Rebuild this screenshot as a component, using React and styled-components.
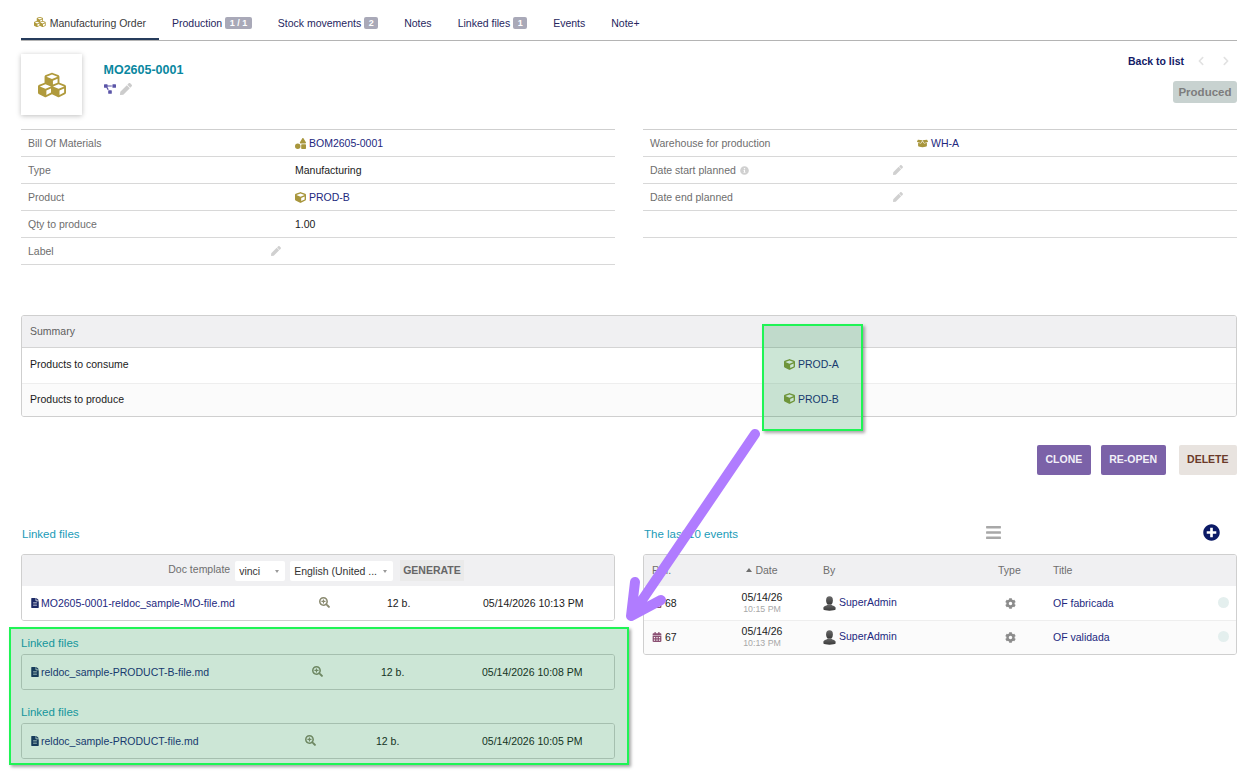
import styled, { createGlobalStyle } from "styled-components";
import {
  FaBars,
  FaBoxOpen,
  FaCalendarAlt,
  FaChevronLeft,
  FaChevronRight,
  FaCog,
  FaCube,
  FaCubes,
  FaFileAlt,
  FaInfoCircle,
  FaPen,
  FaPlusCircle,
  FaProjectDiagram,
  FaSearchPlus,
  FaShapes,
} from "react-icons/fa";

const tabs = [
  { label: "Production", badge: "1 / 1" },
  { label: "Stock movements", badge: "2" },
  { label: "Notes" },
  { label: "Linked files", badge: "1" },
  { label: "Events" },
  { label: "Note+" },
];

const events = [
  { ref: "68", time: "10:15 PM", title: "OF fabricada" },
  { ref: "67", time: "10:13 PM", title: "OF validada" },
];

// generic user picture, a dark bust fading to the bottom
function UserPicture({ id }) {
  return (
    <svg width="13" height="15" viewBox="0 0 13 15">
      <defs>
        <linearGradient id={id} x1="0" y1="0" x2="0" y2="1">
          <stop offset="0" stopColor="#6a6a6a" />
          <stop offset="1" stopColor="#3a3a3a" />
        </linearGradient>
      </defs>
      <ellipse cx="6.5" cy="4.4" rx="3.4" ry="4.2" fill={`url(#${id})`} />
      <path
        d="M4.8 8.2 C4.6 9.6 1 9.6 0.4 11.6 L0.4 13.6 C1.6 15 11.4 15 12.6 13.6 L12.6 11.6 C12 9.6 8.4 9.6 8.2 8.2 Z"
        fill={`url(#${id})`}
      />
    </svg>
  );
}

export default function App() {
  return (
    <Page>
      <GlobalStyle />
      <Tabs>
        <ActiveTab>
          <FaCubes size={12} color="#b09a3c" />
          Manufacturing Order
        </ActiveTab>
        {tabs.map((tab) => (
          <Tab key={tab.label}>
            {tab.label}
            {tab.badge && <Badge>{tab.badge}</Badge>}
          </Tab>
        ))}
      </Tabs>

      <Header>
        <Avatar>
          <FaCubes size={28} color="#b09a3c" />
        </Avatar>
        <HeaderInfo>
          <Ref>MO2605-0001</Ref>
          <RefIcons>
            <FaProjectDiagram size={12} color="#5b55a8" />
            <FaPen size={12} color="#cccccc" />
          </RefIcons>
        </HeaderInfo>
        <HeaderRight>
          <BackRow>
            <BackLink>Back to list</BackLink>
            <FaChevronLeft size={10} color="#e2e2e2" />
            <FaChevronRight size={10} color="#e2e2e2" />
          </BackRow>
          <Status>Produced</Status>
        </HeaderRight>
      </Header>

      <Columns>
        <FieldTable>
          <FieldRow>
            <FieldLabel>Bill Of Materials</FieldLabel>
            <FieldLink>
              <FaShapes size={11} color="#a8963c" />
              BOM2605-0001
            </FieldLink>
          </FieldRow>
          <FieldRow>
            <FieldLabel>Type</FieldLabel>
            <FieldValue>Manufacturing</FieldValue>
          </FieldRow>
          <FieldRow>
            <FieldLabel>Product</FieldLabel>
            <FieldLink>
              <FaCube size={11} color="#a8963c" />
              PROD-B
            </FieldLink>
          </FieldRow>
          <FieldRow>
            <FieldLabel>Qty to produce</FieldLabel>
            <FieldValue>1.00</FieldValue>
          </FieldRow>
          <FieldRow>
            <FieldLabel>
              Label
              <FaPen size={10} color="#d0d0d0" />
            </FieldLabel>
            <FieldValue />
          </FieldRow>
        </FieldTable>
        <FieldTable>
          <FieldRow>
            <FieldLabel>Warehouse for production</FieldLabel>
            <FieldLink>
              <FaBoxOpen size={11} color="#a8963c" />
              WH-A
            </FieldLink>
          </FieldRow>
          <FieldRow>
            <FieldLabel>
              <LabelWithHint>
                Date start planned
                <FaInfoCircle size={9} color="#d0d0d0" />
              </LabelWithHint>
              <FaPen size={10} color="#d0d0d0" />
            </FieldLabel>
            <FieldValue />
          </FieldRow>
          <FieldRow>
            <FieldLabel>
              Date end planned
              <FaPen size={10} color="#d0d0d0" />
            </FieldLabel>
            <FieldValue />
          </FieldRow>
          <FieldRow />
        </FieldTable>
      </Columns>

      <Summary>
        <SummaryHead>Summary</SummaryHead>
        <SummaryRow>
          <span>Products to consume</span>
          <SummaryLink>
            <FaCube size={11} color="#8a9a3c" />
            PROD-A
          </SummaryLink>
        </SummaryRow>
        <SummaryRow $striped>
          <span>Products to produce</span>
          <SummaryLink>
            <FaCube size={11} color="#8a9a3c" />
            PROD-B
          </SummaryLink>
        </SummaryRow>
      </Summary>

      <Actions>
        <ActionButton>CLONE</ActionButton>
        <ActionButton>RE-OPEN</ActionButton>
        <DeleteButton>DELETE</DeleteButton>
      </Actions>

      <Columns>
        <div>
          <SectionTitle>Linked files</SectionTitle>
          <ListBox>
            <Toolbar>
              <ToolbarLabel>Doc template</ToolbarLabel>
              <Select $width={50}>vinci</Select>
              <Select $width={103}>English (United ...</Select>
              <Generate>GENERATE</Generate>
            </Toolbar>
            <FileRow $cols="289px 68px 96px 1fr">
              <FileName>
                <FaFileAlt size={10} color="#1c2a66" />
                MO2605-0001-reldoc_sample-MO-file.md
              </FileName>
              <PreviewIcon size={11} color="#8a8a70" />
              <span>12 b.</span>
              <span>05/14/2026 10:13 PM</span>
            </FileRow>
          </ListBox>
          <SubTitle>Linked files</SubTitle>
          <ListBox>
            <FileRow $cols="282px 69px 101px 1fr">
              <FileName>
                <FaFileAlt size={10} color="#1c2a66" />
                reldoc_sample-PRODUCT-B-file.md
              </FileName>
              <PreviewIcon size={11} color="#8a8a70" />
              <span>12 b.</span>
              <span>05/14/2026 10:08 PM</span>
            </FileRow>
          </ListBox>
          <SubTitle>Linked files</SubTitle>
          <ListBox>
            <FileRow $cols="275px 71px 106px 1fr">
              <FileName>
                <FaFileAlt size={10} color="#1c2a66" />
                reldoc_sample-PRODUCT-file.md
              </FileName>
              <PreviewIcon size={11} color="#8a8a70" />
              <span>12 b.</span>
              <span>05/14/2026 10:05 PM</span>
            </FileRow>
          </ListBox>
        </div>
        <div>
          <EventsTitle>
            <span>The last 10 events</span>
            <TitleIcon>
              <FaBars size={17} color="#a8a8a8" />
            </TitleIcon>
            <TitleIcon>
              <FaPlusCircle size={17} color="#0b1a66" />
            </TitleIcon>
          </EventsTitle>
          <ListBox>
            <EventHead>
              <span>Ref.</span>
              <DateHead>
                <Caret />
                Date
              </DateHead>
              <ByCell>By</ByCell>
              <span>Type</span>
              <span>Title</span>
            </EventHead>
            {events.map((event, index) => (
              <EventRow key={event.ref} $striped={index === 1}>
                <EventRef>
                  <FaCalendarAlt size={10} color="#8a4f72" />
                  {event.ref}
                </EventRef>
                <DateCell>
                  05/14/26
                  <small>{event.time}</small>
                </DateCell>
                <ByCell>
                  <UserLink>
                    <UserPicture id={`user-${event.ref}`} />
                    <UserName>SuperAdmin</UserName>
                  </UserLink>
                </ByCell>
                <TypeCell>
                  <FaCog size={11} color="#8c8c8c" />
                </TypeCell>
                <EventTitle>{event.title}</EventTitle>
                <Dot />
              </EventRow>
            ))}
          </ListBox>
        </div>
      </Columns>

      <TopHighlight />
      <BottomHighlight />
      <Arrow viewBox="0 0 1256 773">
        <path
          d="M755 434 L634 612 M635 582 L631 616 L661 600"
          fill="none"
          stroke="#b07cff"
          strokeWidth="10"
          strokeLinecap="round"
          strokeLinejoin="round"
        />
      </Arrow>
    </Page>
  );
}

const GlobalStyle = createGlobalStyle`
  html, body {
    margin: 0;
    padding: 0;
    background: #ffffff;
  }
  body {
    font-family: "Liberation Sans", Arial, sans-serif;
    font-size: 10.5px;
    color: #1a1a1a;
  }
`;

const Page = styled.div`
  position: relative;
  width: 1256px;
  height: 773px;
  padding: 0 19px 0 21px;
  box-sizing: border-box;
  overflow: hidden;
`;

const Tabs = styled.div`
  height: 41px;
  box-sizing: border-box;
  padding-top: 16px;
  display: flex;
  align-items: flex-start;
  border-bottom: 1px solid #b4b4b4;
`;

const Tab = styled.div`
  height: 24px;
  padding: 0 13px;
  display: flex;
  align-items: flex-start;
  line-height: 14px;
  gap: 3px;
  white-space: nowrap;
  color: #26265e;
`;

const ActiveTab = styled(Tab)`
  width: 138px;
  box-sizing: border-box;
  padding-left: 13px;
  gap: 4px;
  color: #3a3a3a;
  border-bottom: 2px solid #263c5c;
`;

const Badge = styled.span`
  height: 12px;
  margin-top: 1px;
  padding: 0 4.5px;
  border-radius: 2px;
  background: #a9a9b8;
  color: #ffffff;
  font-size: 9px;
  font-weight: 700;
  line-height: 12px;
`;

const Header = styled.div`
  height: 88px;
  box-sizing: border-box;
  padding-top: 13px;
  display: flex;
`;

const Avatar = styled.div`
  width: 61px;
  height: 61px;
  display: flex;
  align-items: center;
  justify-content: center;
  box-shadow: 0 1px 5px rgba(0, 0, 0, 0.25);
`;

const HeaderInfo = styled.div`
  margin-left: 21.5px;
  padding-top: 9px;
`;

const Ref = styled.div`
  font-size: 12.5px;
  font-weight: 700;
  color: #0a87a0;
`;

const RefIcons = styled.div`
  margin-top: 6px;
  display: flex;
  align-items: center;
  gap: 4px;
`;

const HeaderRight = styled.div`
  margin-left: auto;
  display: flex;
  flex-direction: column;
  align-items: flex-end;
`;

const BackRow = styled.div`
  display: flex;
  align-items: center;
  gap: 15px;
  height: 14px;
  padding-right: 6px;
`;

const BackLink = styled.span`
  margin-right: -3px;
  font-weight: 700;
  color: #131a66;
`;

const Status = styled.div`
  margin-top: 13px;
  height: 22px;
  padding: 0 5.5px;
  border-radius: 3px;
  background: #c8d2d0;
  color: #7d7d7d;
  font-size: 11.5px;
  font-weight: 700;
  line-height: 22px;
`;

const Columns = styled.div`
  display: grid;
  grid-template-columns: 594px 594px;
  gap: 28px;
`;

const FieldTable = styled.div`
  border-top: 1px solid #cfcfcf;
`;

const FieldRow = styled.div`
  height: 27px;
  box-sizing: border-box;
  display: grid;
  grid-template-columns: 267px 1fr;
  align-items: center;
  border-bottom: 1px solid #d8d8d8;
`;

const FieldLabel = styled.div`
  padding: 0 7px;
  display: flex;
  align-items: center;
  justify-content: space-between;
  color: #6e6e6e;
`;

const LabelWithHint = styled.span`
  display: flex;
  align-items: center;
  gap: 4px;
`;

const FieldValue = styled.div`
  padding: 0 7px;
`;

const FieldLink = styled(FieldValue)`
  display: flex;
  align-items: center;
  gap: 3px;
  color: #22287e;
`;

const Summary = styled.div`
  margin-top: 50px;
  height: 102px;
  box-sizing: border-box;
  border: 1px solid #cfcfcf;
  border-radius: 3px;
  overflow: hidden;
`;

const SummaryHead = styled.div`
  height: 31px;
  padding-left: 8px;
  line-height: 31px;
  background: #f0f0f2;
  border-bottom: 1px solid #d4d4d4;
  color: #5e5e5e;
`;

const SummaryRow = styled.div`
  height: 35px;
  box-sizing: border-box;
  padding: 0 0 ${(props) => (props.$striped ? "5px" : "3px")} 8px;
  display: grid;
  grid-template-columns: 754px 1fr;
  align-items: center;
  background: ${(props) => (props.$striped ? "#fbfbfb" : "#ffffff")};
  border-top: ${(props) => (props.$striped ? "1px solid #eeeeee" : "none")};
`;

const SummaryLink = styled.span`
  display: flex;
  align-items: center;
  gap: 3px;
  color: #22287e;
`;

const Actions = styled.div`
  margin-top: 28px;
  display: flex;
  justify-content: flex-end;
  gap: 10px;
`;

const ActionButton = styled.div`
  height: 30px;
  padding: 0 8.5px;
  border-radius: 2px;
  background: #7b62a8;
  color: #f2f0f8;
  font-size: 10.5px;
  font-weight: 700;
  line-height: 28px;
`;

const DeleteButton = styled(ActionButton)`
  margin-left: 3px;
  background: #e8e3df;
  color: #6b3a2a;
`;

const SectionTitle = styled.div`
  margin-top: 52px;
  height: 27px;
  padding-left: 1px;
  line-height: 15px;
  font-size: 11.5px;
  color: #1a9bb8;
`;

const EventsTitle = styled(SectionTitle)`
  display: grid;
  grid-template-columns: 341px 218px auto;
  align-items: start;
`;

const TitleIcon = styled.span`
  margin-top: -3px;
  line-height: 0;
`;

const SubTitle = styled.div`
  margin-top: 15px;
  height: 18px;
  line-height: 14px;
  font-size: 11.5px;
  color: #1a9bb8;
`;

const ListBox = styled.div`
  border: 1px solid #cfcfcf;
  border-radius: 3px;
  overflow: hidden;
`;

const Toolbar = styled.div`
  height: 31px;
  display: flex;
  align-items: center;
  justify-content: center;
  padding-right: 4px;
  background: #f0f0f2;
`;

const ToolbarLabel = styled.span`
  margin: 0 5px 3px 0;
  color: #6e6e6e;
`;

const Select = styled.div`
  position: relative;
  width: ${(props) => props.$width}px;
  height: 20px;
  box-sizing: border-box;
  margin-right: 5px;
  padding-left: 4px;
  border-radius: 2px;
  background: #ffffff;
  color: #333333;
  line-height: 21px;

  &::after {
    content: "";
    position: absolute;
    right: 6px;
    top: 9px;
    border: 2px solid transparent;
    border-top: 3px solid #999999;
  }
`;

const Generate = styled.div`
  height: 21px;
  margin-left: 2px;
  padding: 0 3px;
  background: #eaeaea;
  color: #666666;
  font-weight: 700;
  line-height: 21px;
`;

const FileRow = styled.div`
  height: 34px;
  padding-left: 8px;
  display: grid;
  grid-template-columns: ${(props) => props.$cols};
  align-items: center;
  background: #ffffff;
`;

const FileName = styled.span`
  display: flex;
  align-items: center;
  gap: 1px;
  color: #22287e;
`;

const PreviewIcon = styled(FaSearchPlus)`
  margin-bottom: 2px;
`;

const EventHead = styled.div`
  height: 31px;
  padding: 0 0 2px 8px;
  box-sizing: border-box;
  display: grid;
  grid-template-columns: 80px 60px 206px 55px 1fr;
  align-items: center;
  background: #f0f0f2;
  color: #6e6e6e;
`;

const DateHead = styled.span`
  display: flex;
  align-items: center;
  justify-content: center;
  gap: 3px;
`;

const Caret = styled.i`
  border: 3px solid transparent;
  border-top: none;
  border-bottom: 4px solid #6e6e6e;
`;

const EventRow = styled.div`
  height: 34px;
  box-sizing: border-box;
  padding: 0 0 ${(props) => (props.$striped ? "1px" : "0")} 8px;
  display: grid;
  grid-template-columns: 80px 60px 206px 55px 1fr 18px;
  align-items: center;
  background: ${(props) => (props.$striped ? "#fbfbfb" : "#ffffff")};
  border-top: ${(props) => (props.$striped ? "1px solid #eeeeee" : "none")};
`;

const EventRef = styled.span`
  display: flex;
  align-items: center;
  gap: 3px;
`;

const DateCell = styled.div`
  display: flex;
  flex-direction: column;
  align-items: center;
  margin-top: -1px;
  line-height: 12px;

  small {
    font-size: 8.8px;
    color: #a8a8a8;
  }
`;

const ByCell = styled.div`
  padding-left: 31px;
`;

const UserLink = styled.span`
  display: flex;
  align-items: center;
  gap: 3px;
  color: #22287e;
`;

const UserName = styled.span`
  margin-bottom: 3px;
`;

const TypeCell = styled.div`
  width: 24px;
  display: flex;
  justify-content: center;
  margin-top: 1px;
`;

const EventTitle = styled.span`
  color: #22287e;
`;

const Dot = styled.i`
  width: 11px;
  height: 11px;
  margin-bottom: 2px;
  border-radius: 50%;
  background: #e4efee;
`;

const Highlight = styled.div`
  position: absolute;
  box-sizing: border-box;
  border: 2px solid #1ff455;
  background: rgba(0, 128, 50, 0.2);
  box-shadow: 2px 2px 3px rgba(0, 0, 0, 0.35);
`;

const TopHighlight = styled(Highlight)`
  left: 762px;
  top: 324px;
  width: 101px;
  height: 107px;
`;

const BottomHighlight = styled(Highlight)`
  left: 9px;
  top: 627px;
  width: 620px;
  height: 138px;
`;

const Arrow = styled.svg`
  position: absolute;
  left: 0;
  top: 0;
  width: 1256px;
  height: 773px;
  pointer-events: none;
`;
